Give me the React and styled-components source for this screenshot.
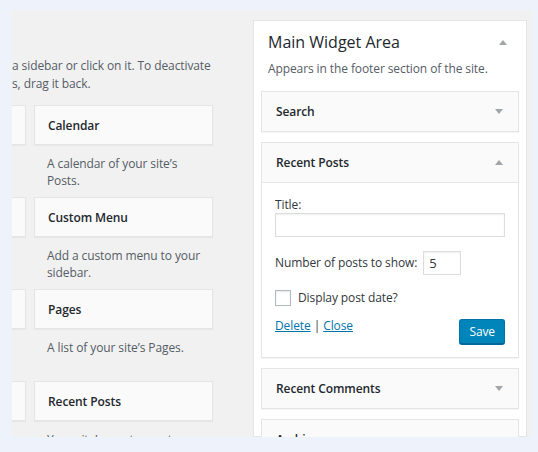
import React from 'react';
import styled, { createGlobalStyle } from 'styled-components';

const GlobalStyle = createGlobalStyle`
  html, body {
    margin: 0;
    padding: 0;
    background: #eef2fa;
    font-family: "Open Sans", "Liberation Sans", sans-serif;
    color: #23282d;
  }
`;

const Page = styled.div`
  padding: 10px 6px 15px 12px;
  box-sizing: border-box;
  width: 538px;
  height: 452px;
`;

const Panel = styled.div`
  height: 427px;
  background: #f1f1f1;
  overflow: hidden;
  display: flex;
  gap: 40px;
  font-size: 12px;
  letter-spacing: -0.1px;
`;

const LeftArea = styled.div`
  width: 201px;
  flex: none;
  padding-top: 47px;
`;

const Intro = styled.p`
  margin: 0 0 12px;
  line-height: 18px;
  color: #555d66;
  white-space: nowrap;
`;

const WidgetGrid = styled.div`
  display: grid;
  grid-template-columns: 14px 179px;
  column-gap: 8px;
`;

const CutBox = styled.div`
  height: 40px;
  background: #fafafa;
  border: 1px solid #e5e5e5;
  border-left: none;
  box-sizing: border-box;
  box-shadow: 0 1px 1px rgba(0, 0, 0, 0.04);
`;

const WidgetItem = styled.div`
  height: ${({ $h }) => $h}px;
`;

const WidgetBox = styled.div`
  height: 40px;
  background: #fafafa;
  border: 1px solid #e5e5e5;
  box-sizing: border-box;
  box-shadow: 0 1px 1px rgba(0, 0, 0, 0.04);
  display: flex;
  align-items: center;
  padding-left: 13px;
  font-weight: 600;
  color: #23282d;
`;

const WidgetDesc = styled.div`
  padding: 10px 13px 0 13px;
  line-height: 17px;
  color: #555d66;
`;

const Sidebar = styled.div`
  width: 274px;
  flex: none;
  margin-top: 10px;
  background: #fff;
  border: 1px solid #e5e5e5;
  box-sizing: border-box;
  box-shadow: 0 1px 1px rgba(0, 0, 0, 0.04);
  padding: 0 7px;
`;

const SidebarHead = styled.div`
  display: flex;
  align-items: center;
  justify-content: space-between;
  padding: 10px 12px 0 7px;
`;

const SidebarTitle = styled.h2`
  margin: 0;
  font-size: 16px;
  font-weight: 400;
  letter-spacing: 0;
  line-height: 22px;
  color: #23282d;
`;

const SidebarDesc = styled.p`
  margin: 7px 0 13px 7px;
  line-height: 18px;
  color: #555d66;
`;

const Arrow = styled.span`
  width: 0;
  height: 0;
  border-left: 4px solid transparent;
  border-right: 4px solid transparent;
  ${({ $up }) =>
    $up ? 'border-bottom: 5px solid #a0a5aa;' : 'border-top: 5px solid #a0a5aa;'}
`;

const Widget = styled.div`
  margin-bottom: 10px;
  background: #fafafa;
  border: 1px solid #e5e5e5;
  box-shadow: 0 1px 1px rgba(0, 0, 0, 0.04);
`;

const WidgetTop = styled.div`
  height: 39px;
  display: flex;
  align-items: center;
  justify-content: space-between;
  padding: 0 15px 0 14px;
  font-weight: 600;
  color: #23282d;
`;

const WidgetBody = styled.div`
  background: #fff;
  border-top: 1px solid #e5e5e5;
  padding: 14px 13px 13px 13px;
  color: #32373c;
`;

const Label = styled.div`
  line-height: 16px;
`;

const TextInput = styled.div`
  height: 24px;
  border: 1px solid #ddd;
  box-sizing: border-box;
  box-shadow: inset 0 1px 2px rgba(0, 0, 0, 0.07);
  background: #fff;
`;

const Row = styled.div`
  display: flex;
  align-items: center;
  gap: ${({ $gap }) => $gap || 0}px;
  margin-top: ${({ $mt }) => $mt || 0}px;
`;

const NumberInput = styled.div`
  width: 38px;
  height: 24px;
  border: 1px solid #ddd;
  box-sizing: border-box;
  box-shadow: inset 0 1px 2px rgba(0, 0, 0, 0.07);
  display: flex;
  align-items: center;
  padding-left: 5px;
  font-size: 13px;
  color: #32373c;
`;

const Checkbox = styled.span`
  width: 16px;
  height: 16px;
  border: 1px solid #b4b9be;
  box-sizing: border-box;
  box-shadow: inset 0 1px 2px rgba(0, 0, 0, 0.1);
  background: #fff;
`;

const Actions = styled.div`
  display: flex;
  justify-content: space-between;
  align-items: flex-start;
  margin-top: 11px;
`;

const Links = styled.div`
  line-height: 18px;
  color: #32373c;
`;

const Link = styled.a`
  color: #0073aa;
  text-decoration: underline;
`;

const SaveButton = styled.button`
  margin-top: 2px;
  height: 25px;
  padding: 0 9px 1px;
  background: #0085ba;
  border: 1px solid #0073aa;
  border-bottom-color: #006799;
  border-radius: 3px;
  box-shadow: 0 1px 0 #006799;
  color: #fff;
  font-family: inherit;
  font-size: 12px;
  letter-spacing: -0.1px;
  line-height: 21px;
`;

const available = [
  { name: 'Calendar', desc: 'A calendar of your site’s Posts.', h: 92 },
  { name: 'Custom Menu', desc: 'Add a custom menu to your sidebar.', h: 92 },
  { name: 'Pages', desc: 'A list of your site’s Pages.', h: 92 },
  { name: 'Recent Posts', desc: 'Your site’s most recent Posts.', h: 92 },
];

export default function App() {
  return (
    <>
      <GlobalStyle />
      <Page>
        <Panel>
          <LeftArea>
            <Intro>
              a sidebar or click on it. To deactivate
              <br />
              s, drag it back.
            </Intro>
            <WidgetGrid>
              {available.map(w => (
                <React.Fragment key={w.name}>
                  <WidgetItem $h={w.h}>
                    <CutBox />
                  </WidgetItem>
                  <WidgetItem $h={w.h}>
                    <WidgetBox>{w.name}</WidgetBox>
                    <WidgetDesc>{w.desc}</WidgetDesc>
                  </WidgetItem>
                </React.Fragment>
              ))}
            </WidgetGrid>
          </LeftArea>
          <Sidebar>
            <SidebarHead>
              <SidebarTitle>Main Widget Area</SidebarTitle>
              <Arrow $up />
            </SidebarHead>
            <SidebarDesc>Appears in the footer section of the site.</SidebarDesc>
            <Widget>
              <WidgetTop>
                Search
                <Arrow />
              </WidgetTop>
            </Widget>
            <Widget>
              <WidgetTop>
                Recent Posts
                <Arrow $up />
              </WidgetTop>
              <WidgetBody>
                <Label>Title:</Label>
                <TextInput />
                <Row $gap={6} $mt={14}>
                  <Label>Number of posts to show:</Label>
                  <NumberInput>5</NumberInput>
                </Row>
                <Row $gap={7} $mt={15}>
                  <Checkbox />
                  <Label>Display post date?</Label>
                </Row>
                <Actions>
                  <Links>
                    <Link href="#">Delete</Link> | <Link href="#">Close</Link>
                  </Links>
                  <SaveButton>Save</SaveButton>
                </Actions>
              </WidgetBody>
            </Widget>
            <Widget>
              <WidgetTop>
                Recent Comments
                <Arrow />
              </WidgetTop>
            </Widget>
            <Widget>
              <WidgetTop>
                Archives
                <Arrow />
              </WidgetTop>
            </Widget>
          </Sidebar>
        </Panel>
      </Page>
    </>
  );
}
